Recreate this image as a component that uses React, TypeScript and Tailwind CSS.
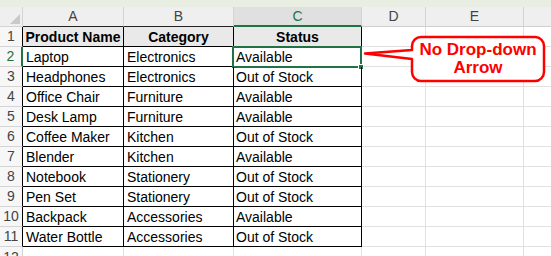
import React from "react";

const cols = [101, 110, 128, 64, 98];
const letters = ["A", "B", "C", "D", "E"];
const data: [string, string, string][] = [
  ["Laptop", "Electronics", "Available"],
  ["Headphones", "Electronics", "Out of Stock"],
  ["Office Chair", "Furniture", "Available"],
  ["Desk Lamp", "Furniture", "Available"],
  ["Coffee Maker", "Kitchen", "Out of Stock"],
  ["Blender", "Kitchen", "Available"],
  ["Notebook", "Stationery", "Out of Stock"],
  ["Pen Set", "Stationery", "Out of Stock"],
  ["Backpack", "Accessories", "Available"],
  ["Water Bottle", "Accessories", "Out of Stock"],
];

const font = { fontFamily: '"Liberation Sans", Arial, sans-serif' };

export default function App() {
  return (
    <div className="relative w-[551px] h-[256px] overflow-hidden bg-white text-[14px] text-black" style={font}>
      <div className="h-[7px] bg-[#e8eee1]" />
      {/* column header row */}
      <div className="flex h-[20px]">
        <div className="relative w-[23px] shrink-0 bg-[#efefef] border-r border-b border-[#d4d4d4]">
          <div className="absolute right-[2px] bottom-[2px] w-0 h-0 border-l-[10px] border-l-transparent border-b-[10px] border-b-[#c9c9c9]" />
        </div>
        {letters.map((l, i) => (
          <div
            key={l}
            style={{ width: cols[i] }}
            className={
              "shrink-0 flex items-center justify-center border-r border-[#d4d4d4] " +
              (i === 2
                ? "bg-[#e0e0e0] text-[#217346] border-b-2 border-b-[#217346]"
                : i < 2
                ? "bg-[#efefef] text-[#444] border-b border-b-[#222]"
                : "bg-[#efefef] text-[#444] border-b border-b-[#cfcfcf]")
            }
          >
            {l}
          </div>
        ))}
        <div className="flex-1 bg-[#efefef] border-b border-[#cfcfcf]" />
      </div>
      {/* row 1 (table header) */}
      <div className="flex h-[20px]">
        <div className="w-[23px] shrink-0 bg-[#f7f7f7] text-[#444] flex items-center justify-center border-r border-r-black border-b border-b-[#d4d4d4]">
          1
        </div>
        {["Product Name", "Category", "Status"].map((t, i) => (
          <div
            key={t}
            style={{ width: cols[i] }}
            className="shrink-0 bg-[#e9e9e9] font-bold flex items-center justify-center pt-[1px] border-r border-b border-black"
          >
            {t}
          </div>
        ))}
        <div style={{ width: cols[3] }} className="shrink-0 border-r border-b border-[#e1e1e1]" />
        <div style={{ width: cols[4] }} className="shrink-0 border-r border-b border-[#e1e1e1]" />
        <div className="flex-1 border-b border-[#e1e1e1]" />
      </div>
      {data.map((r, ri) => {
        const n = ri + 2;
        const sel = n === 2;
        return (
          <div key={n} className="flex h-[20px]">
            <div
              className={
                "w-[23px] shrink-0 bg-[#f7f7f7] flex items-center justify-center border-b border-b-[#d4d4d4] " +
                (sel ? "text-[#217346] border-r-2 border-r-[#217346]" : "text-[#444] border-r border-r-black")
              }
            >
              {n}
            </div>
            {r.map((t, i) => (
              <div
                key={i}
                style={{ width: cols[i] }}
                className={"relative shrink-0 flex items-center pt-[2px] border-r border-b border-black " + (i === 2 ? "pl-[2px]" : "pl-[3px]")}
              >
                {t}
                {sel && i === 2 && (
                  <div className="absolute -left-[2px] -top-[1px] w-[130px] h-[22px] border-2 border-[#217346]">
                    <div className="absolute -right-[4px] -bottom-[4px] w-[6px] h-[6px] bg-[#217346] border border-white" />
                  </div>
                )}
              </div>
            ))}
            <div style={{ width: cols[3] }} className="shrink-0 border-r border-b border-[#e1e1e1]" />
            <div style={{ width: cols[4] }} className="shrink-0 border-r border-b border-[#e1e1e1]" />
            <div className="flex-1 border-b border-[#e1e1e1]" />
          </div>
        );
      })}
      {/* row 12 */}
      <div className="flex h-[20px]">
        <div className="w-[23px] shrink-0 bg-[#f7f7f7] text-[#444] flex items-center justify-center border-r border-[#d4d4d4]">
          12
        </div>
        {cols.map((w, i) => (
          <div key={i} style={{ width: w }} className="shrink-0 border-r border-[#e1e1e1]" />
        ))}
      </div>

      {/* callout */}
      <svg className="absolute left-0 top-0 pointer-events-none" width="551" height="256">
        <path
          d="M 421 37 H 535 A 9 9 0 0 1 544 46 V 72 A 9 9 0 0 1 535 81 H 421 A 9 9 0 0 1 412 72 V 59 L 365 53.5 L 412 50 V 46 A 9 9 0 0 1 421 37 Z"
          fill="white"
          stroke="#ff0000"
          strokeWidth="2.5"
          strokeLinejoin="round"
        />
      </svg>
      <div className="absolute left-[412px] top-[37px] w-[132px] h-[44px] flex flex-col items-center justify-center text-[#ff0000] font-bold text-[17px] leading-[18px]">
        <span>No Drop-down</span>
        <span>Arrow</span>
      </div>
    </div>
  );
}
